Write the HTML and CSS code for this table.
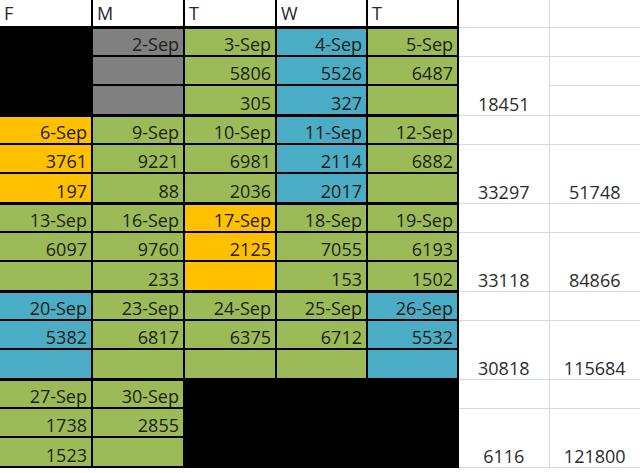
FILE: index.html
```html
<!DOCTYPE html>
<html lang="en">
<head>
<meta charset="utf-8">
<title>September</title>
<link rel="stylesheet" href="styles.css">
</head>
<body>
<table class="sheet">
  <colgroup>
    <col class="c1"><col class="c2"><col class="c3"><col class="c4"><col class="c5"><col class="c6"><col class="c7">
  </colgroup>
  <tr class="hdr">
    <th class="day first">F</th><th class="day">M</th><th class="day">T</th><th class="day">W</th><th class="day">T</th>
    <td class="sum"></td><td class="sum"></td>
  </tr>

  <tr class="ra wk">
    <td class="day first blk"></td><td class="day gry">2-Sep</td><td class="day grn">3-Sep</td><td class="day blu">4-Sep</td><td class="day grn">5-Sep</td>
    <td class="sum"></td><td class="sum"></td>
  </tr>
  <tr class="ra">
    <td class="day first blk"></td><td class="day gry"></td><td class="day grn">5806</td><td class="day blu">5526</td><td class="day grn">6487</td>
    <td class="sum" rowspan="2">18451</td><td class="sum"></td>
  </tr>
  <tr class="rb">
    <td class="day first blk"></td><td class="day gry"></td><td class="day grn">305</td><td class="day blu">327</td><td class="day grn"></td>
    <td class="sum"></td>
  </tr>

  <tr class="ra wk">
    <td class="day first org">6-Sep</td><td class="day grn">9-Sep</td><td class="day grn">10-Sep</td><td class="day blu">11-Sep</td><td class="day grn">12-Sep</td>
    <td class="sum"></td><td class="sum"></td>
  </tr>
  <tr class="ra">
    <td class="day first org">3761</td><td class="day grn">9221</td><td class="day grn">6981</td><td class="day blu">2114</td><td class="day grn">6882</td>
    <td class="sum" rowspan="2">33297</td><td class="sum" rowspan="2">51748</td>
  </tr>
  <tr class="rb">
    <td class="day first org">197</td><td class="day grn">88</td><td class="day grn">2036</td><td class="day blu">2017</td><td class="day grn"></td>
  </tr>

  <tr class="ra wk">
    <td class="day first grn">13-Sep</td><td class="day grn">16-Sep</td><td class="day org">17-Sep</td><td class="day grn">18-Sep</td><td class="day grn">19-Sep</td>
    <td class="sum"></td><td class="sum"></td>
  </tr>
  <tr class="ra">
    <td class="day first grn">6097</td><td class="day grn">9760</td><td class="day org">2125</td><td class="day grn">7055</td><td class="day grn">6193</td>
    <td class="sum" rowspan="2">33118</td><td class="sum" rowspan="2">84866</td>
  </tr>
  <tr class="rb">
    <td class="day first grn"></td><td class="day grn">233</td><td class="day org"></td><td class="day grn">153</td><td class="day grn">1502</td>
  </tr>

  <tr class="ra wk">
    <td class="day first blu">20-Sep</td><td class="day grn">23-Sep</td><td class="day grn">24-Sep</td><td class="day grn">25-Sep</td><td class="day blu">26-Sep</td>
    <td class="sum"></td><td class="sum"></td>
  </tr>
  <tr class="ra">
    <td class="day first blu">5382</td><td class="day grn">6817</td><td class="day grn">6375</td><td class="day grn">6712</td><td class="day blu">5532</td>
    <td class="sum" rowspan="2">30818</td><td class="sum" rowspan="2">115684</td>
  </tr>
  <tr class="rb">
    <td class="day first blu"></td><td class="day grn"></td><td class="day grn"></td><td class="day grn"></td><td class="day blu"></td>
  </tr>

  <tr class="ra wk">
    <td class="day first grn">27-Sep</td><td class="day grn">30-Sep</td><td class="day blk"></td><td class="day blk"></td><td class="day blk"></td>
    <td class="sum"></td><td class="sum"></td>
  </tr>
  <tr class="ra">
    <td class="day first grn">1738</td><td class="day grn">2855</td><td class="day blk"></td><td class="day blk"></td><td class="day blk"></td>
    <td class="sum" rowspan="2">6116</td><td class="sum" rowspan="2">121800</td>
  </tr>
  <tr class="rb last">
    <td class="day first grn">1523</td><td class="day grn"></td><td class="day blk"></td><td class="day blk"></td><td class="day blk"></td>
  </tr>
</table>
</body>
</html>
```

FILE: styles.css
```css
html, body {
  margin: 0;
  padding: 0;
  background: #ffffff;
}

.sheet {
  border-collapse: collapse;
  table-layout: fixed;
  width: 640px;
  font-family: "Open Sans", "Liberation Sans", sans-serif;
  font-size: 18px;
  line-height: 18px;
  color: #1e2114;
}

.c1 { width: 92px; }
.c2 { width: 92px; }
.c3 { width: 92px; }
.c4 { width: 91px; }
.c5 { width: 91px; }
.c6 { width: 91px; }
.c7 { width: 91px; }

.hdr { height: 27px; }
.ra { height: 29px; }
.rb { height: 30px; }

.sheet th,
.sheet td {
  padding: 0 4px 2px 4px;
  vertical-align: bottom;
  white-space: nowrap;
  overflow: hidden;
}

.day {
  border: 2px solid #000;
  text-align: right;
}

.hdr .day {
  border-top: none;
  background: #ffffff;
  text-align: left;
  font-weight: normal;
  color: #2a2430;
  padding-left: 4px;
  padding-bottom: 4px;
}

.first {
  border-left: none;
}

.wk .day {
  border-top-width: 3px;
}

.sum {
  border: 1px solid #d3d9e4;
  text-align: center;
  color: #2b2b2b;
}

.hdr .sum {
  border-top: none;
}

.sum:last-child {
  border-right: none;
}

.grn { background: #9bbb59; }
.blu { background: #4bacc6; }
.org { background: #ffc000; }
.gry { background: #808080; }
.blk { background: #000000; }
```
